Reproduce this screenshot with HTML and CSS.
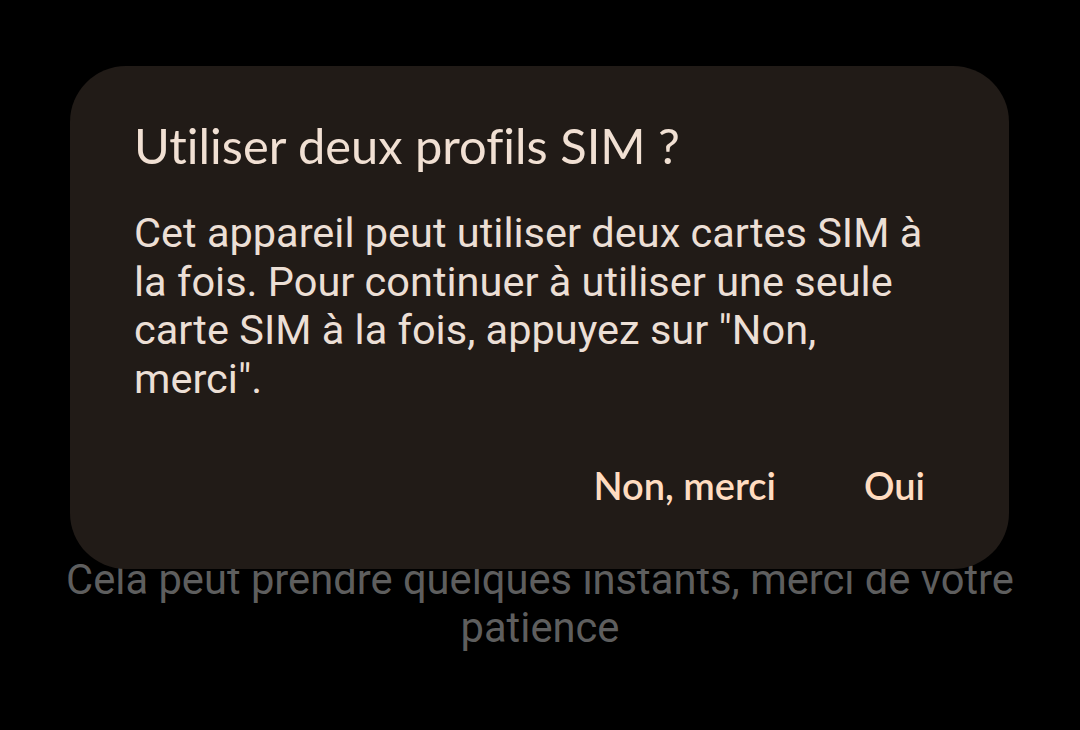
FILE: index.html
```html
<!DOCTYPE html>
<html lang="fr">
<head>
    <meta charset="UTF-8">
    <title>Profils SIM</title>
    <link rel="stylesheet" href="styles.css">
</head>
<body>
    <div class="ecran">
        <p class="attente">Cela peut prendre quelques instants, merci de votre patience</p>
    </div>

    <!-- Boîte de dialogue au-dessus de l'écran -->
    <div class="dialogue">
        <h2 class="titre">Utiliser deux profils SIM ?</h2>
        <p class="message">Cet appareil peut utiliser deux cartes SIM à la fois. Pour continuer à utiliser une seule carte SIM à la fois, appuyez sur "Non, merci".</p>
        <div class="actions">
            <button class="bouton">Non, merci</button>
            <button class="bouton">Oui</button>
        </div>
    </div>
</body>
</html>
```

FILE: styles.css
```css
html, body {
    margin: 0;
    background-color: #000;
    height: 100%;
}
body {
    font-family: Roboto, "Noto Sans", sans-serif;
    position: relative;
    overflow: hidden;
}
.ecran {
    padding: 556px 50px 0;
}
.attente {
    margin: 0;
    color: #5e5e5e;
    font-size: 41.7px;
    line-height: 48px;
    text-align: center;
}
.dialogue {
    position: absolute;
    left: 70px;
    top: 66px;
    width: 939px;
    height: 503px;
    box-sizing: border-box;
    padding: 51px 64px 0;
    background-color: #211b17;
    border-radius: 56px;
}
.titre {
    margin: 0;
    font-family: Lato, "Open Sans", sans-serif;
    font-variant-ligatures: none;
    font-weight: 400;
    font-size: 48.8px;
    line-height: 56px;
    color: #f1e0d3;
}
.message {
    margin: 36px 0 0;
    font-size: 41.5px;
    line-height: 48.5px;
    color: #ecdfd5;
}
.actions {
    display: flex;
    justify-content: flex-end;
    gap: 88px;
    margin-top: 59px;
    padding-right: 20px;
}
.bouton {
    background: none;
    border: none;
    padding: 0;
    font-family: Lato, "Open Sans", sans-serif;
    font-weight: 600;
    font-size: 38px;
    line-height: 46px;
    color: #ffdcc0;
    cursor: pointer;
}
```
